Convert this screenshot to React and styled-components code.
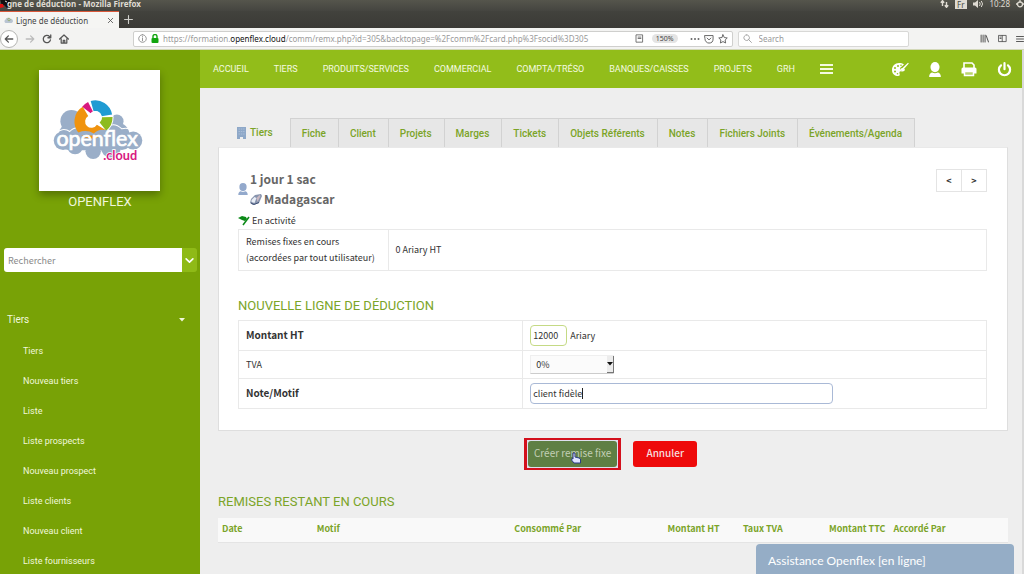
import React from "react";
import styled, { createGlobalStyle } from "styled-components";

const sans = `"Noto Sans CJK SC", "Open Sans", sans-serif`;
const roboto = `Roboto, "Liberation Sans", sans-serif`;
const chrome = `"Noto Sans", "Open Sans", sans-serif`;

const Global = createGlobalStyle`
  * { box-sizing: border-box; }
  html, body { margin: 0; padding: 0; }
  body { background: #eeeeee; font-family: ${sans}; font-size: 9px; color: #333; overflow: hidden; }
  button, input, select { font: inherit; color: inherit; margin: 0; }
  a { color: inherit; text-decoration: none; }
`;

const Page = styled.div`
  display: flex;
  flex-direction: column;
  height: 100vh;
`;

/* ---------- browser window ---------- */
const Chrome = styled.header`
  flex: none;
  font-family: ${chrome};
`;
const TitleBar = styled.div`
  display: flex;
  align-items: center;
  justify-content: space-between;
  height: 11px;
  padding: 0 0 3px;
  background: linear-gradient(#55554c, #454540);
  color: #dfdbd2;
  font-size: 8px;
  line-height: 8px;
  white-space: nowrap;
`;
const WindowName = styled.div`
  display: flex;
  align-items: center;
  font-weight: 700;
  svg { margin-right: -5px; }
`;
const Tray = styled.div`
  display: flex;
  align-items: center;
  gap: 6px;
`;
const Lang = styled.span`
  padding: 0 2px;
  background: #dfdbd2;
  color: #4a4a44;
  line-height: 9px;
`;
const TabStrip = styled.div`
  display: flex;
  height: 17px;
  background: linear-gradient(#42423d, #3b3a36);
`;
const BrowserTab = styled.div`
  display: flex;
  align-items: center;
  gap: 3px;
  width: 119px;
  padding: 0 5px 0 4px;
  border-top: 1px solid #d9583a;
  background: #f5f5f3;
  color: #444;
  font-size: 8px;
  white-space: nowrap;
  span { flex: 1; }
`;
const PlainButton = styled.button`
  display: inline-flex;
  align-items: center;
  justify-content: center;
  padding: 0;
  border: 0;
  background: none;
  color: ${(p) => p.$color || "#555"};
`;
const NewTab = styled(PlainButton)`
  width: 19px;
`;
const ToolBar = styled.div`
  display: flex;
  align-items: center;
  height: 22px;
  background: #f3f3f2;
  border-bottom: 1px solid #d3d8b8;
`;
const NavButtons = styled.div`
  display: flex;
  align-items: center;
  gap: 7px;
  width: 133px;
  flex: none;
`;
const Back = styled(PlainButton)`
  width: 18px;
  height: 18px;
  border: 1px solid #b5b5b3;
  border-radius: 50%;
  background: #fff;
`;
const UrlBar = styled.div`
  display: flex;
  align-items: center;
  gap: 4px;
  flex: 606;
  height: 16px;
  padding: 0 4px;
  border: 1px solid #cfcfcd;
  border-radius: 2px;
  background: #fff;
  color: #9a9a9a;
  font-size: 8px;
  line-height: 14px;
  white-space: nowrap;
  b { font-weight: 400; color: #111; }
`;
const Address = styled.span`
  flex: 1;
`;
const Zoom = styled.span`
  padding: 0 4px;
  margin: 0 8px 0 4px;
  border-radius: 5px;
  background: #e4e4e4;
  color: #444;
  font-size: 7px;
  line-height: 9px;
`;
const SearchBar = styled.label`
  display: flex;
  align-items: center;
  gap: 4px;
  flex: 166;
  height: 16px;
  margin-left: 5px;
  padding: 0 4px;
  border: 1px solid #d8d8d6;
  border-radius: 2px;
  background: #fff;
  input {
    flex: 1;
    min-width: 0;
    padding: 0 3px;
    border: 0;
    background: none;
    font-size: 8px;
    line-height: 14px;
    outline: 0;
  }
  input::placeholder { color: #999; opacity: 1; }
`;
const BarEnd = styled.div`
  display: flex;
  align-items: center;
  justify-content: flex-end;
  gap: 9px;
  flex: none;
  width: 115px;
`;

/* ---------- application shell ---------- */
const Shell = styled.div`
  display: flex;
  flex: 1;
  min-height: 0;
`;
const Sidebar = styled.aside`
  flex: none;
  width: 200px;
  background: #78a206;
  color: #f0f7dc;
  font-family: ${roboto};
`;
const LogoCard = styled.div`
  width: 121px;
  height: 121px;
  margin: 20px auto 0 39px;
  background: #fff;
  box-shadow: 0 4px 8px rgba(0, 0, 0, 0.3);
  svg { display: block; width: 100%; height: 100%; }
`;
const Company = styled.div`
  margin-top: 3px;
  font-size: 13px;
  line-height: 16px;
  text-align: center;
`;
const SideSearch = styled.form`
  display: flex;
  height: 24px;
  margin: 38px 3px 0 4px;
  border-radius: 3px;
  overflow: hidden;
  input {
    flex: 1;
    min-width: 0;
    padding: 0 4px;
    border: 0;
    background: #fff;
    font-family: ${sans};
    font-size: 9px;
    outline: 0;
  }
  input::placeholder { color: #8a8a8a; opacity: 1; }
  button { width: 15px; background: #8fba17; }
`;
const MenuHead = styled.button`
  display: flex;
  align-items: center;
  justify-content: space-between;
  width: 100%;
  margin-top: 38px;
  padding: 0 15px 0 7px;
  border: 0;
  background: none;
  font-size: 10px;
  line-height: 20px;
  text-align: left;
`;
const MenuList = styled.ul`
  margin: 6px 0 0;
  padding: 0 0 0 23px;
  list-style: none;
  font-size: 9px;
  line-height: 30px;
`;

const Main = styled.div`
  flex: 1;
  min-width: 0;
  border-right: 2px solid #d9d9d9;
`;
const TopNav = styled.nav`
  display: flex;
  align-items: center;
  height: 38px;
  padding: 0 10px 0 13px;
  background: #92bd1a;
  color: #f4fae0;
  font-family: ${roboto};
  font-size: 9px;
`;
const NavLinks = styled.div`
  display: flex;
  align-items: center;
  gap: 25px;
  flex: 1;
  white-space: nowrap;
`;
const NavTools = styled.div`
  display: flex;
  align-items: center;
  gap: 20px;
`;
const Content = styled.main`
  padding: 30px 14px 0 18px;
`;
const Tabs = styled.nav`
  display: flex;
  height: 29px;
  font-family: ${roboto};
  font-size: 10px;
  font-weight: 500;
  color: #7ba428;
  white-space: nowrap;
`;
const Tab = styled.a`
  display: flex;
  align-items: center;
  gap: 4px;
  padding: ${(p) => (p.$active ? "0 17px 0 19px" : "0 12px 0 11px")};
  background: ${(p) => (p.$active ? "none" : "#e7e7e7")};
  border: solid #d2d2d2;
  border-width: ${(p) => (p.$active ? "0 1px 0 0" : "1px 1px 0 0")};
`;
const Card = styled.section`
  padding: 21px 20px 21px 19px;
  border: 1px solid #dedede;
  border-top-color: #e9e9e9;
  background: #fff;
`;
const Banner = styled.div`
  display: flex;
  justify-content: space-between;
  align-items: flex-start;
`;
const Party = styled.div`
  display: flex;
  align-items: center;
  gap: 2px;
  color: #666;
  font-size: 12px;
  font-weight: 700;
  line-height: 20px;
  div { display: flex; align-items: center; gap: 2px; }
  > svg { color: #93a9cc; }
`;
const Pager = styled.div`
  display: flex;
  button {
    width: 26px;
    height: 23px;
    padding: 0;
    border: 1px solid #e4e4e4;
    background: #fff;
    font-weight: 700;
    line-height: 20px;
  }
  button + button { margin-left: -1px; }
`;
const Status = styled.div`
  display: flex;
  align-items: center;
  gap: 2px;
  margin-top: 4px;
  line-height: 16px;
`;
const Grid = styled.table`
  width: 100%;
  border-collapse: collapse;
  border: 1px solid #e6e6e6;
  table-layout: fixed;
  th, td {
    padding: 4px 7px;
    border: 1px solid #e9e9e9;
    line-height: 16px;
    text-align: left;
    font-weight: 400;
  }
  th:first-child { width: ${(p) => p.$first}; }
`;
const FieldName = styled.label`
  font-size: ${(p) => (p.$required ? "10px" : "9px")};
  font-weight: ${(p) => (p.$required ? 700 : 400)};
`;
const Heading = styled.h2`
  margin: ${(p) => p.$space};
  color: #7ba428;
  font-family: ${roboto};
  font-size: 13px;
  font-weight: 400;
  line-height: 20px;
`;
const Field = styled.div`
  position: relative;
  display: flex;
  align-items: center;
  gap: 3px;
`;
const TextInput = styled.input`
  width: ${(p) => p.$width};
  height: 21px;
  padding: 0 2px;
  border: 1px solid ${(p) => p.$border};
  border-radius: 4px;
  background: #fff;
  outline: 0;
`;
const Caret = styled.span`
  position: absolute;
  left: 52px;
  top: 5px;
  width: 1px;
  height: 11px;
  background: #222;
`;
const Rate = styled.div`
  position: relative;
  width: 84px;
  select {
    display: block;
    width: 100%;
    height: 19px;
    padding: 0 5px;
    border: 1px solid #efefef;
    border-bottom-color: #ccc;
    background: #fbfbfb;
    appearance: none;
  }
`;
const RateArrow = styled.span`
  position: absolute;
  top: 1px;
  right: 0;
  width: 7px;
  height: 17px;
  border: solid #777;
  border-width: 0 1px 1px 0;
  background: #ececec;
  pointer-events: none;
  svg { display: block; margin: 6px 0 0; }
`;
const Actions = styled.div`
  display: flex;
  align-items: center;
  justify-content: center;
  gap: 12px;
  margin-top: 7px;
  padding-right: 5px;
`;
const Frame = styled.div`
  padding: 1px;
  border: solid #d3101c;
  border-width: 2px 3px;
  background: #dfe0ee;
`;
const ActionButton = styled.button`
  position: relative;
  display: block;
  height: 26px;
  padding: 0 ${(p) => p.$pad} 2px;
  border: 0;
  border-radius: 3px;
  background: ${(p) => p.$bg};
  color: ${(p) => p.$color};
  font-size: 10px;
  font-weight: ${(p) => p.$weight};
  line-height: 16px;
`;
const Pointer = styled.svg`
  position: absolute;
  left: 43px;
  top: 11px;
`;
const Remaining = styled.table`
  width: 100%;
  table-layout: fixed;
  border-collapse: collapse;
  border-bottom: 1px solid #e4e4e4;
  background: #f9f9f9;
  color: #7ba428;
  line-height: 16px;
  white-space: nowrap;
  th { padding: 3px 4px 5px; text-align: left; }
  th.amount { text-align: right; }
`;
const Help = styled.button`
  position: fixed;
  right: 10px;
  bottom: 0;
  width: 258px;
  height: 30px;
  padding: 2px 12px 0;
  border: 0;
  border-radius: 4px 4px 0 0;
  background: #95adc6;
  color: #fff;
  font-family: Lato, sans-serif;
  font-size: 12px;
  text-align: left;
`;

const Line = ({ w = 10, d, sw = 1.2, color = "currentColor", box = 16 }) => (
  <svg width={w} height={w} viewBox={`0 0 ${box} ${box}`} fill="none" stroke={color} strokeWidth={sw * 1.3} strokeLinecap="round" strokeLinejoin="round">
    <path d={d} />
  </svg>
);

const Person = ({ w, h }) => (
  <svg width={w} height={h} viewBox="0 0 22 28" fill="currentColor">
    <ellipse cx="11" cy="9.5" rx="8.500" ry="9.5" />
    <path d="M0 28c0-6 3-8 6-8.500 3 2 7 2 10 0 3 .5 6 2.500 6 8.500z" />
  </svg>
);

const Logo = () => (
  <svg viewBox="0 0 362 362" role="img" aria-label="openflex.cloud">
    <g fill="#9aaec8">
      <circle cx="97" cy="153" r="33" />
      <circle cx="233" cy="153" r="20" />
      <circle cx="232" cy="195" r="39" />
      <circle cx="162" cy="243" r="23" />
      <circle cx="108" cy="228" r="24" />
      <circle cx="215" cy="232" r="30" />
      <rect x="60" y="160" width="200" height="80" rx="30" />
    </g>
    <g fill="none" stroke="#fff" strokeWidth="3">
      <path d="M50 190a31 31 0 0 1 42-6 34 34 0 0 1 48-2 34 34 0 0 1 46 0" />
      <path d="M200 178q20-28 48-2q20-6 34 8" />
    </g>
    <g fill="#9aaec8">
      <circle cx="72" cy="211" r="28" />
      <circle cx="112" cy="211" r="30" />
      <circle cx="158" cy="211" r="29" />
      <circle cx="205" cy="211" r="30" />
      <circle cx="248" cy="209" r="30" />
      <circle cx="282" cy="211" r="27" />
    </g>
    <circle cx="169" cy="142" r="54" fill="#fff" />
    <g fill="none" strokeWidth="32">
      <path d="M159 108A35 35 0 0 1 203 136" stroke="#1f9bd3" />
      <path d="M204 141A35 35 0 0 1 191 169" stroke="#8dbb1e" />
      <path d="M187 172A35 35 0 1 1 139 124" stroke="#f0930e" />
      <path d="M142 120A35 35 0 0 1 154 110" stroke="#d8187f" />
    </g>
    <circle cx="169" cy="142" r="19" fill="#fff" />
    <path d="M118 187q24-10 46 3q16-18 44-8v14h-90z" fill="#9aaec8" />
    <text x="52" y="227" fill="#fff" stroke="#fff" strokeWidth="2" fontFamily="Lato, sans-serif" fontSize="64">openflex</text>
    <text x="192" y="269" fill="#d8187f" fontFamily="Lato, sans-serif" fontWeight="700" fontSize="38" stroke="#fff" strokeWidth="5" paintOrder="stroke">.cloud</text>
  </svg>
);

const navItems = ["ACCUEIL", "TIERS", "PRODUITS/SERVICES", "COMMERCIAL", "COMPTA/TRÉSO", "BANQUES/CAISSES", "PROJETS", "GRH"];
const sideItems = ["Tiers", "Nouveau tiers", "Liste", "Liste prospects", "Nouveau prospect", "Liste clients", "Nouveau client", "Liste fournisseurs"];
const tabs = ["Fiche", "Client", "Projets", "Marges", "Tickets", "Objets Référents", "Notes", "Fichiers Joints", "Événements/Agenda"];

function BrowserChrome() {
  return (
    <Chrome>
      <TitleBar>
        <WindowName>
          <svg width="12" height="10" viewBox="0 0 12 10">
            <path d="M0 0h9l2 3-1 4-3 2-3-3-2 1z" fill="#111" />
            <path d="M0 5l3 0 1 3-4 1z" fill="#e01010" />
            <path d="M5 2l2 1M8 5l1-2" stroke="#ddd" />
          </svg>
          gne de déduction - Mozilla Firefox
        </WindowName>
        <Tray>
          <svg width="9" height="8" viewBox="0 0 9 8" fill="none" stroke="currentColor" strokeWidth="1.4"><path d="M2.500 6V1M.8 2.700l1.700-2 1.700 2M6.500 2v5M4.800 5.300l1.700 2 1.700-2" /></svg>
          <Lang>Fr</Lang>
          <svg width="11" height="8" viewBox="0 0 11 8" fill="currentColor"><path d="M0 2.500h2L5 0v8L2 5.500H0z" /><path d="M6.500 2q1.500 2 0 4M8.300 1q2.500 3 0 6" fill="none" stroke="currentColor" /></svg>
          <span>10:28</span>
          <svg width="8" height="8" viewBox="0 0 8 8" fill="none" stroke="currentColor" strokeWidth="1.3"><circle cx="4" cy="4.3" r="2.5" /><path d="M4 0v3" /><path d="M0 4h1M7 4h1" /></svg>
        </Tray>
      </TitleBar>
      <TabStrip>
        <BrowserTab>
          <svg width="9" height="7" viewBox="0 0 9 7"><path d="M1.500 6a2 2 0 0 1 0-3.500A2.500 2.500 0 0 1 6 2a2 2 0 0 1 1.500 4z" fill="#b9c4d2" /><circle cx="5" cy="2.5" r="1.3" fill="none" stroke="#88a54a" strokeWidth=".6" /></svg>
          <span>Ligne de déduction</span>
          <PlainButton aria-label="Close tab"><Line w={7} d="M3 3l10 10M13 3L3 13" sw={1.5} /></PlainButton>
        </BrowserTab>
        <NewTab aria-label="New tab" $color="#d0d0cc"><Line w={9} d="M8 1v14M1 8h14" sw={1.5} /></NewTab>
      </TabStrip>
      <ToolBar>
        <NavButtons>
          <Back aria-label="Back"><Line d="M14 8H2M7 3L2 8l5 5" sw={1.6} /></Back>
          <PlainButton aria-label="Forward" $color="#bbb"><Line d="M2 8h12M9 3l5 5-5 5" sw={1.6} /></PlainButton>
          <PlainButton aria-label="Reload"><Line d="M13.500 9.500A5.800 5.800 0 1 1 12 4l2 2M14 1.500V6H9.500" sw={1.6} /></PlainButton>
          <PlainButton aria-label="Home"><Line d="M1 8l7-6.500L15 8M3.500 7v7.500h9V7M6.800 14v-4h2.400v4" sw={1.5} /></PlainButton>
        </NavButtons>
        <UrlBar>
          <Line w={9} color="#888" d="M8 1.200a6.800 6.800 0 1 0 .01 0M8 7v5M8 4.300v.1" />
          <svg width="8" height="9" viewBox="0 0 8 9"><path d="M2 4V2.500a2 2 0 0 1 4 0V4" fill="none" stroke="#12a50f" strokeWidth="1.4" /><rect x=".5" y="4" width="7" height="5" rx="1" fill="#12a50f" /></svg>
          <Address>https://formation.<b>openflex.cloud</b>/comm/remx.php?id=305&amp;backtopage=%2Fcomm%2Fcard.php%3Fsocid%3D305</Address>
          <Line w={9} color="#666" d="M2.500 1.500h11v13h-11zM5.500 5.500h5M5.500 8h5" />
          <Zoom>150%</Zoom>
          <svg width="10" height="4" viewBox="0 0 10 4" fill="#666"><circle cx="1.5" cy="2" r="1" /><circle cx="5" cy="2" r="1" /><circle cx="8.5" cy="2" r="1" /></svg>
          <Line color="#666" d="M1.500 2.500h13V8a6.500 6.500 0 0 1-13 0zM5 6.500l3 3 3-3" />
          <Line color="#666" d="M8 1.300l2.100 4.400 4.700.6-3.400 3.300.8 4.800L8 12.100l-4.200 2.300.8-4.800L1.200 6.300l4.700-.6z" />
        </UrlBar>
        <SearchBar>
          <Line w={9} color="#999" d="M10 10l5 5M6.500 1.500a5 5 0 1 0 .01 0" />
          <input type="text" placeholder="Search" aria-label="Search" />
        </SearchBar>
        <BarEnd>
          <PlainButton aria-label="Library"><Line w={9} d="M2 2v12M5.500 2v12M9 2v12M11 3l4 11" sw={1.4} /></PlainButton>
          <PlainButton aria-label="Sidebars"><Line w={9} d="M1.500 2.500h13v11h-13zM7.500 2.500v11M3.500 5.500h2M3.500 8h2" /></PlainButton>
          <PlainButton aria-label="Menu"><Line w={8} d="M1 3h14M1 8h14M1 13h14" sw={1.5} /></PlainButton>
        </BarEnd>
      </ToolBar>
    </Chrome>
  );
}

export default function App() {
  return (
    <>
      <Global />
      <Page>
        <BrowserChrome />
        <Shell>
          <Sidebar>
            <LogoCard><Logo /></LogoCard>
            <Company>OPENFLEX</Company>
            <SideSearch>
              <input type="text" placeholder="Rechercher" aria-label="Rechercher" />
              <PlainButton type="button" aria-label="Choisir" $color="#fff"><Line w={9} d="M2 5l6 6 6-6" sw={2.2} /></PlainButton>
            </SideSearch>
            <MenuHead>
              Tiers
              <svg width="6" height="4" viewBox="0 0 6 4" fill="currentColor"><path d="M0 0h6L3 3.500z" /></svg>
            </MenuHead>
            <MenuList>
              {sideItems.map((t) => <li key={t}><a href="#">{t}</a></li>)}
            </MenuList>
          </Sidebar>
          <Main>
            <TopNav>
              <NavLinks>
                {navItems.map((t) => <a href="#" key={t}>{t}</a>)}
                <PlainButton aria-label="Plus" $color="#f4fae0">
                  <svg width="13" height="10" viewBox="0 0 13 10" stroke="currentColor" strokeWidth="2"><path d="M0 1h13M0 5h13M0 9h13" /></svg>
                </PlainButton>
              </NavLinks>
              <NavTools>
                <PlainButton aria-label="Thème" $color="#fff">
                  <svg width="17" height="15" viewBox="0 0 17 15">
                    <path d="M7 1C3 1 0 4 0 8s3 6 6 6c2 0 2-1.500 1.500-2.500C7 10 8 9 9.500 9.500 12 10 13 8.500 13 7L9 8.500 8 6l4-3.500C10.500 1.300 9 1 7 1z" fill="currentColor" />
                    <path d="M8.500 8.300c0-1.500.8-2.300 2-2.300L16 .8l.8.8L12 7c0 1.500-1.500 2-3.500 1.300z" fill="currentColor" />
                    <g fill="#92bd1a"><circle cx="3" cy="6" r="1" /><circle cx="6" cy="4" r="1" /><circle cx="3" cy="9.5" r="1" /><circle cx="5.5" cy="11.8" r=".8" /><circle cx="9" cy="3.3" r=".8" /></g>
                  </svg>
                </PlainButton>
                <PlainButton aria-label="Utilisateur" $color="#fff"><Person w={12} h={15} /></PlainButton>
                <PlainButton aria-label="Imprimer" $color="#fff">
                  <svg width="16" height="15" viewBox="0 0 16 15">
                    <path d="M3 6V1h8l2 2v3" fill="none" stroke="currentColor" strokeWidth="1.6" />
                    <path d="M2 5.500h12a1.500 1.500 0 0 1 1.500 1.500v4.500H.5V7A1.500 1.500 0 0 1 2 5.500z" fill="currentColor" />
                    <path d="M3.500 9.500h9v4h-9z" fill="#b9d56c" stroke="currentColor" strokeWidth="1.5" />
                  </svg>
                </PlainButton>
                <PlainButton aria-label="Déconnexion" $color="#fff">
                  <svg width="15" height="15" viewBox="0 0 15 15" fill="none" stroke="currentColor" strokeWidth="2.2" strokeLinecap="round"><path d="M4 3.300a5.600 5.600 0 1 0 7 0M7.500 1.200v6" /></svg>
                </PlainButton>
              </NavTools>
            </TopNav>
            <Content>
              <Tabs>
                <Tab href="#" $active>
                  <svg width="9" height="12" viewBox="0 0 9 12"><path d="M0 0h9v12H6V10H3v2H0z" fill="#8ea8c8" /><path d="M1.500 2h6M1.500 4.500h6M1.500 7h6" stroke="#a9bdd8" strokeDasharray="1.5 .8" /></svg>
                  Tiers
                </Tab>
                {tabs.map((t) => <Tab href="#" key={t}>{t}</Tab>)}
              </Tabs>
              <Card>
                <Banner>
                  <Party>
                    <Person w={10} h={12} />
                    <span>
                      <div>1 jour 1 sac</div>
                      <div>
                        <svg width="12" height="12" viewBox="0 0 12 12"><path d="M1 6l4-4 6-1 1 2-3 7-6 2-3-2z" fill="#8794ad" /><path d="M1.500 7l3-3 2 1-2 5-3-1z" fill="#e9eef7" /><path d="M6.500 5l3-3 1 1-3 6z" fill="#cbb9c2" /><path d="M1 10l3 1.500 5-2" fill="none" stroke="#3f4f75" /></svg>
                        Madagascar
                      </div>
                    </span>
                  </Party>
                  <Pager>
                    <button aria-label="Précédent">&lt;</button>
                    <button aria-label="Suivant">&gt;</button>
                  </Pager>
                </Banner>
                <Status>
                  <svg width="12" height="10" viewBox="0 0 12 10"><path d="M0 2l4-2 4 1 1 2-2 2-3-1z" fill="#0c8a18" /><path d="M11 1L5 9" stroke="#0c8a18" strokeWidth="1.5" /></svg>
                  En activité
                </Status>
                <Grid $first="20%">
                  <tbody>
                    <tr>
                      <th scope="row">Remises fixes en cours<br />(accordées par tout utilisateur)</th>
                      <td>0 Ariary HT</td>
                    </tr>
                  </tbody>
                </Grid>
                <Heading $space="25px 0 4px">NOUVELLE LIGNE DE DÉDUCTION</Heading>
                <Grid $first="38%">
                  <tbody>
                    <tr>
                      <th scope="row"><FieldName htmlFor="amount" $required>Montant HT</FieldName></th>
                      <td><Field><TextInput id="amount" defaultValue="12000" $width="37px" $border="#c5da85" />Ariary</Field></td>
                    </tr>
                    <tr>
                      <th scope="row"><FieldName htmlFor="rate">TVA</FieldName></th>
                      <td>
                        <Rate>
                          <select id="rate" defaultValue="0"><option value="0">0%</option><option value="20">20%</option></select>
                          <RateArrow><svg width="6" height="4" viewBox="0 0 6 4"><path d="M0 0h6L3 3.500z" fill="#111" /></svg></RateArrow>
                        </Rate>
                      </td>
                    </tr>
                    <tr>
                      <th scope="row"><FieldName htmlFor="note" $required>Note/Motif</FieldName></th>
                      <td><Field><TextInput id="note" defaultValue="client fidèle" $width="303px" $border="#a9b9d6" /><Caret /></Field></td>
                    </tr>
                  </tbody>
                </Grid>
              </Card>
              <Actions>
                <Frame>
                  <ActionButton $pad="6px" $bg="#5f7f44" $color="#c3cfb6" $weight={400}>
                    Créer remise fixe
                    <Pointer width="10" height="12" viewBox="0 0 10 12"><path d="M2 1h2v4l4 1 1.500 1v4H3L.5 8 1 6.500l1 .5z" fill="#dfe3ff" stroke="#2b3b8a" /></Pointer>
                  </ActionButton>
                </Frame>
                <ActionButton $pad="13px" $bg="#ee0a0a" $color="#f6dede" $weight={500}>Annuler</ActionButton>
              </Actions>
              <Heading $space="22px 0 6px">REMISES RESTANT EN COURS</Heading>
              <Remaining>
                <colgroup>
                  <col width="12%" /><col width="25%" /><col width="15%" /><col width="12%" /><col width="8%" /><col width="13%" /><col width="15%" />
                </colgroup>
                <thead>
                  <tr>
                    <th>Date</th>
                    <th>Motif</th>
                    <th>Consommé Par</th>
                    <th className="amount">Montant HT</th>
                    <th className="amount">Taux TVA</th>
                    <th className="amount">Montant TTC</th>
                    <th>Accordé Par</th>
                  </tr>
                </thead>
              </Remaining>
            </Content>
          </Main>
        </Shell>
        <Help>Assistance Openflex [en ligne]</Help>
      </Page>
    </>
  );
}
